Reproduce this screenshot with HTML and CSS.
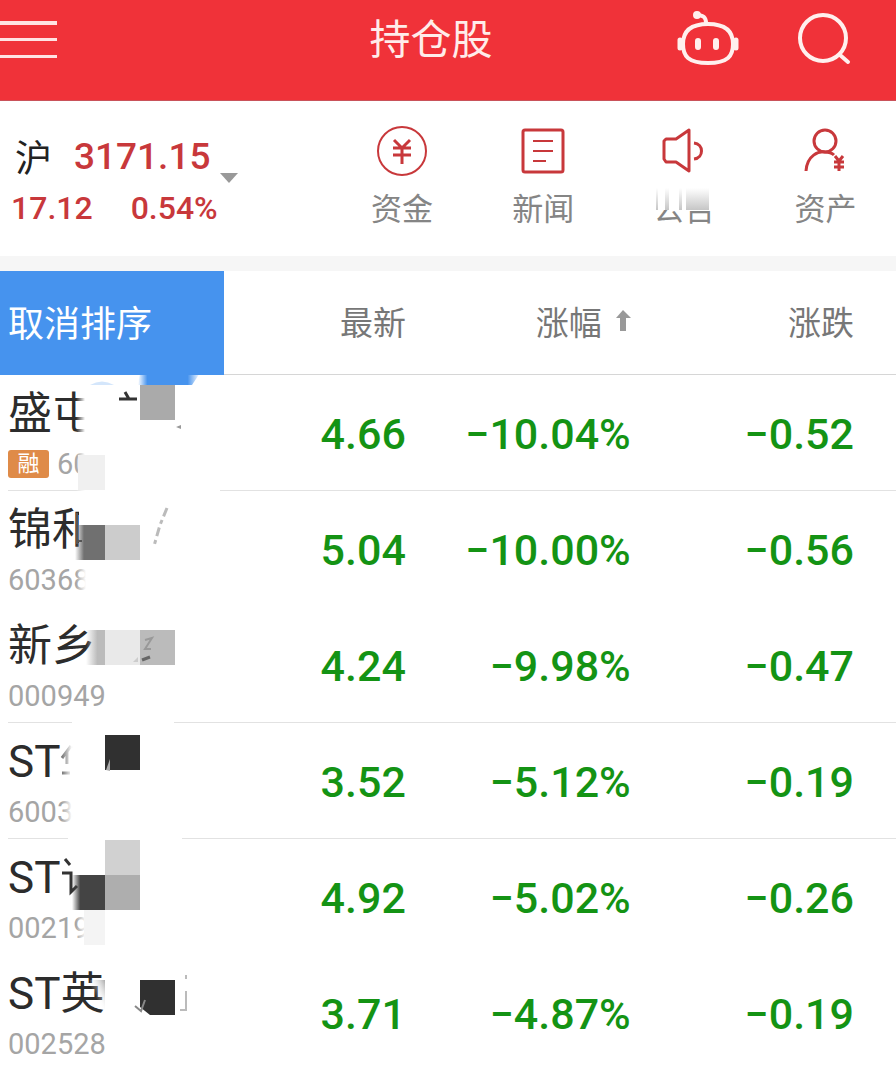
FILE: index.html
```html
<!DOCTYPE html>
<html lang="zh-CN">
<head>
<meta charset="utf-8">
<meta name="viewport" content="width=device-width, initial-scale=1">
<title>持仓股</title>
<link rel="stylesheet" href="styles.css">
</head>
<body>
<div class="app">
  <header class="topbar">
    <button class="icon-btn" aria-label="菜单">
      <svg width="58" height="40" viewBox="0 0 58 40"><g fill="#ffe3e3"><rect y="2" width="57" height="4"/><rect y="19" width="57" height="3"/><rect y="36" width="57" height="3"/></g></svg>
    </button>
    <h1 class="title">持仓股</h1>
    <div class="actions">
      <button class="icon-btn" aria-label="智能助手">
        <svg width="62" height="56" viewBox="0 0 62 56" fill="none" stroke="#fff0ee" stroke-width="4" stroke-linecap="round"><path d="M20 4C27 4 29 7 29 12"/><circle cx="20" cy="4" r="2" fill="#fff0ee"/><path d="M31 13C49 13 56 21 56 33C56 45 51 52 31 52S6 45 6 33C6 21 13 13 31 13Z"/><path d="M3 29V37M59 29V37" stroke-width="5"/><path d="M21 30V36M39 30V36" stroke-width="6"/></svg>
      </button>
      <button class="icon-btn" aria-label="搜索">
        <svg width="64" height="56" viewBox="0 0 64 56" fill="none" stroke="#fff0ee" stroke-width="4" stroke-linecap="round"><circle cx="25" cy="27" r="23"/><path d="M42 44L50 51"/></svg>
      </button>
    </div>
  </header>

  <section class="summary">
    <button class="index">
      <span class="index-main"><span class="market">沪</span><span class="points">3171.15</span>
        <svg class="caret" width="18" height="10" viewBox="0 0 18 10"><path d="M0 0H18L9 10Z" fill="#999"/></svg></span>
      <span class="index-sub"><span>17.12</span><span>0.54%</span></span>
    </button>
    <nav class="shortcuts">
      <button class="shortcut">
        <svg width="52" height="52" viewBox="0 0 52 52" fill="none" stroke="#c8383b" stroke-width="3"><circle cx="26" cy="26" r="24" stroke-width="2"/><path d="M18 15L26 23L34 15M17 23H35M17 30H35M26 23V39"/></svg>
        <span>资金</span>
      </button>
      <button class="shortcut">
        <svg width="52" height="52" viewBox="0 0 52 52" fill="none" stroke="#c8383b" stroke-width="3"><rect x="6" y="5" width="40" height="42" rx="2"/><path d="M16 16H36M16 26H36M16 36H29" stroke-width="2"/></svg>
        <span>新闻</span>
      </button>
      <button class="shortcut">
        <svg width="52" height="52" viewBox="0 0 52 52" fill="none" stroke="#c8383b" stroke-width="3" stroke-linejoin="round"><path d="M8 14L6 16V34L8 37H18L31 46V5L18 14Z"/><path d="M36 18C46 19 46 33 36 34"/></svg>
        <span class="smudged">公告
          <svg class="smudge" width="62" height="26" viewBox="0 0 62 26"><defs><linearGradient id="sg" x2="0" y2="1"><stop stop-color="#fff"/><stop offset="1" stop-color="#c6c6c6"/></linearGradient></defs><rect width="62" height="22" fill="#fff"/><path d="M3 0H5V22H3ZM12 0H16V22H12ZM26 0H29V22H26ZM33 0H56V22H33Z" fill="url(#sg)"/></svg>
        </span>
      </button>
      <button class="shortcut">
        <svg width="52" height="52" viewBox="0 0 52 52" fill="none" stroke="#c8383b" stroke-width="3"><circle cx="26" cy="16" r="11"/><path d="M7 46C8 30 20 26 26 27C30 27 33 28 35 30"/><path d="M36 31L40 36L44 31M35 37H45M35 42H45M40 36V46"/></svg>
        <span>资产</span>
      </button>
    </nav>
  </section>

  <main class="list">
    <table class="stocks">
      <thead>
        <tr>
          <th class="col-name"><button class="reset">取消排序</button></th>
          <th class="col-last">最新</th>
          <th class="col-pct"><button class="sort">涨幅<svg width="15" height="22" viewBox="0 0 15 22"><path d="M7 0L15 8H10V21H4V8H0Z" fill="#999"/></svg></button></th>
          <th class="col-chg">涨跌</th>
        </tr>
      </thead>
      <tbody>
        <tr class="lined">
          <td class="stock"><div class="name">盛屯</div><div class="code"><span class="tag">融</span>60</div>
            <svg class="mosaic" viewBox="0 0 224 116"><defs><linearGradient id="fade"><stop stop-color="#fff" stop-opacity="0"/><stop offset="1" stop-color="#fff"/></linearGradient><linearGradient id="blue"><stop stop-color="#4693ee" stop-opacity="0"/><stop offset=".15" stop-color="#4693ee"/><stop offset=".8" stop-color="#4693ee"/><stop offset="1" stop-color="#4693ee" stop-opacity="0"/></linearGradient></defs><rect x="76" y="0" width="9" height="116" fill="url(#fade)"/><rect x="85" y="0" width="135" height="116" fill="#fff"/><path d="M140 -2H200L192 10H138Z" fill="url(#blue)"/><path d="M90 10Q102 3 114 10Z" fill="#d4e6fb"/><path d="M119 24H137M125 17L129 24" stroke="#333" stroke-width="3"/><rect x="140" y="10" width="35" height="35" fill="#aaa"/><path d="M176 52L181 50V54Z" fill="#999"/><rect x="78" y="80" width="27" height="35" fill="#f0f0f0"/></svg></td>
          <td class="num">4.66</td><td class="num">−10.04%</td><td class="num last">−0.52</td>
        </tr>
        <tr>
          <td class="stock"><div class="name">锦和</div><div class="code">60368</div>
            <svg class="mosaic" viewBox="0 0 224 116"><defs><linearGradient id="dark"><stop stop-color="#707070" stop-opacity="0"/><stop offset=".3" stop-color="#707070"/></linearGradient></defs><rect x="79" y="4" width="60" height="64" fill="#fff"/><rect x="76" y="70" width="10" height="38" fill="url(#fade)"/><rect x="86" y="70" width="20" height="38" fill="#fff"/><rect x="75" y="34" width="30" height="35" fill="url(#dark)"/><rect x="105" y="34" width="35" height="35" fill="#ccc"/><path d="M77 22V53M77 50H82" stroke="#555" stroke-width="2"/><path d="M167 17L160 34L154 55" stroke="#bbb" stroke-width="3" stroke-dasharray="9 4 4 4" fill="none"/></svg></td>
          <td class="num">5.04</td><td class="num">−10.00%</td><td class="num last">−0.56</td>
        </tr>
        <tr class="lined">
          <td class="stock"><div class="name">新乡</div><div class="code">000949</div>
            <svg class="mosaic" viewBox="0 0 224 116"><defs><linearGradient id="mid"><stop stop-color="#bbb" stop-opacity="0"/><stop offset=".6" stop-color="#bbb"/></linearGradient></defs><rect x="86" y="23" width="19" height="35" fill="url(#mid)"/><rect x="105" y="23" width="35" height="35" fill="#e9e9e9"/><rect x="140" y="23" width="35" height="35" fill="#bbb"/><path d="M133 55L138 50V55Z" fill="#ccc"/><path d="M145 33L152 31L145 42H151" stroke="#999" stroke-width="2" fill="none"/><path d="M142 53L150 50" stroke="#666" stroke-width="3"/><rect x="72" y="113" width="102" height="3" fill="#fff"/></svg></td>
          <td class="num">4.24</td><td class="num">−9.98%</td><td class="num last">−0.47</td>
        </tr>
        <tr class="lined">
          <td class="stock"><div class="name">ST</div><div class="code">6003</div>
            <svg class="mosaic" viewBox="0 0 224 116"><path d="M62 35L71 23M67 29V41M62 50H70" stroke="#777" stroke-width="3"/><rect x="62" y="15" width="10" height="94" fill="url(#fade)"/><rect x="105" y="12" width="35" height="35" fill="#303030"/><path d="M106 47L110 36V48Z" fill="#aaa"/><rect x="68" y="113" width="114" height="3" fill="#fff"/></svg></td>
          <td class="num">3.52</td><td class="num">−5.12%</td><td class="num last">−0.19</td>
        </tr>
        <tr>
          <td class="stock"><div class="name">ST</div><div class="code">00219</div>
            <svg class="mosaic" viewBox="0 0 224 116"><defs><linearGradient id="deep"><stop stop-color="#444" stop-opacity="0"/><stop offset=".25" stop-color="#444"/></linearGradient></defs><path d="M65 20L70 26M62 34H71V53L77 47" stroke="#333" stroke-width="3" fill="none"/><rect x="105" y="1" width="35" height="35" fill="#d1d1d1"/><rect x="72" y="36" width="33" height="35" fill="url(#deep)"/><rect x="105" y="36" width="35" height="35" fill="#aeaeae"/><rect x="76" y="71" width="10" height="35" fill="url(#fade)"/><rect x="84" y="71" width="21" height="35" fill="#f4f4f4"/></svg></td>
          <td class="num">4.92</td><td class="num">−5.02%</td><td class="num last">−0.26</td>
        </tr>
        <tr>
          <td class="stock"><div class="name">ST英</div><div class="code">002528</div>
            <svg class="mosaic" viewBox="0 0 224 116"><defs><linearGradient id="soft" x1="1" y1="0" x2="0" y2="1"><stop stop-color="#aaa"/><stop offset=".6" stop-color="#fff" stop-opacity="0"/></linearGradient></defs><rect x="90" y="25" width="15" height="30" fill="url(#soft)"/><path d="M140 25H175V60H150L140 52Z" fill="#303030"/><path d="M135 51L141 56L145 45" stroke="#888" stroke-width="2" fill="none"/><path d="M186 20V24M186 36V56M180 55H187" stroke="#bbb" stroke-width="2"/></svg></td>
          <td class="num">3.71</td><td class="num">−4.87%</td><td class="num last">−0.19</td>
        </tr>
      </tbody>
    </table>
  </main>
</div>
</body>
</html>
```
FILE: styles.css
```css
* { box-sizing: border-box; }

body {
  margin: 0;
  background: #fff;
  color: #2c2c2c;
  font-family: Roboto, "Noto Sans CJK SC", sans-serif;
}

button {
  margin: 0;
  padding: 0;
  border: 0;
  background: none;
  color: inherit;
  font: inherit;
  text-align: left;
  cursor: pointer;
}

svg { display: block; }

.app {
  display: flex;
  flex-direction: column;
  height: 100vh;
  overflow: hidden;
}

.topbar {
  display: grid;
  grid-template-columns: 1fr auto 1fr;
  align-items: center;
  flex: none;
  height: 101px;
  padding: 0 34px 22px 0;
  background: #f03239;
  border-bottom: 1px solid #c9525a;
}

.title {
  margin: 0;
  padding-top: 2px;
  color: #ffecea;
  font-size: 41px;
  font-weight: 400;
  line-height: 60px;
}

.actions {
  display: flex;
  justify-content: flex-end;
  gap: 59px;
}

.summary {
  display: grid;
  grid-template-columns: 37% 1fr;
  flex: none;
  height: 170px;
  border-bottom: 15px solid #f6f6f6;
}

.index {
  display: flex;
  flex-direction: column;
  padding: 30px 0 0 11px;
  color: #c8383b;
  font-weight: 500;
}

.index-main {
  display: flex;
  align-items: center;
  height: 50px;
  font-size: 37px;
}

.market {
  width: 63px;
  padding-left: 4px;
  color: #222;
  font-size: 37px;
  font-weight: 400;
}

.caret {
  align-self: flex-end;
  margin: 0 0 -2px 10px;
}

.index-sub {
  display: flex;
  gap: 38px;
  font-size: 32px;
  line-height: 54px;
}

.shortcuts {
  display: grid;
  grid-template-columns: repeat(4, 1fr);
}

.shortcut {
  display: flex;
  flex-direction: column;
  align-items: center;
  padding-top: 24px;
  color: #858585;
  font-size: 31px;
  line-height: 44px;
}

.shortcut > span { margin-top: 11px; }

.smudged { position: relative; }

.smudge {
  position: absolute;
  top: 0;
  left: 0;
}

.list {
  flex: 1;
  min-height: 0;
  overflow: hidden;
}

.stocks {
  width: 100%;
  table-layout: fixed;
  border-collapse: separate;
  border-spacing: 0;
}

.stocks th {
  height: 104px;
  padding: 0 0 4px;
  border-bottom: 1px solid #d6d6d6;
  color: #777;
  font-size: 33px;
  font-weight: 400;
  text-align: right;
}

.stocks .col-name {
  width: 25%;
  padding: 0;
  border-bottom-color: #4693ee;
}
.col-last { width: 20.3%; }
.col-pct { width: 25.1%; }
.stocks .col-chg { padding-right: 42px; }

.reset {
  display: block;
  width: 100%;
  height: 103px;
  padding: 0 0 4px 8px;
  background: #4693ee;
  color: #fff;
  font-size: 36px;
}

.sort {
  display: inline-flex;
  align-items: center;
  gap: 14px;
}

.stocks td {
  height: 116px;
  padding: 0;
}

.lined td {
  background: linear-gradient(#e2e2e2, #e2e2e2) no-repeat 0 100% / 100% 1px;
}

.lined .stock { background-position: 8px 100%; }

.stocks .stock {
  position: relative;
  padding: 4px 0 0 8px;
}

.name {
  height: 56px;
  font-size: 44px;
  line-height: 56px;
}

.code {
  display: flex;
  align-items: center;
  gap: 8px;
  height: 40px;
  margin-top: 2px;
  color: #a5a5a5;
  font-size: 29px;
}

.tag {
  width: 41px;
  border-radius: 3px;
  background: #df8b48;
  color: #fff;
  font-size: 22px;
  line-height: 28px;
  text-align: center;
}

.mosaic {
  position: absolute;
  top: 0;
  left: 0;
  width: 224px;
  height: 116px;
  overflow: visible;
}

.stocks .num {
  padding-top: 2px;
  color: #149314;
  font-size: 43px;
  font-weight: 500;
  text-align: right;
}

.stocks .last { padding-right: 42px; }
```
